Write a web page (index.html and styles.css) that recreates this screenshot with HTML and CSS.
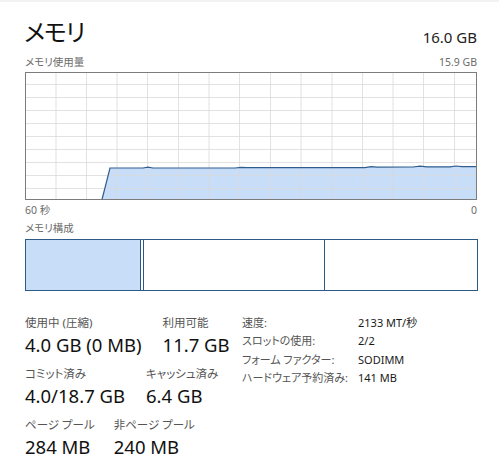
FILE: index.html
```html
<!DOCTYPE html>
<html lang="ja">
<head>
<meta charset="utf-8">
<link rel="stylesheet" href="styles.css">
</head>
<body>
<div class="topline"></div>
<main class="panel">
  <header class="head">
    <h1 class="title">メモリ</h1>
    <div class="total">16.0 GB</div>
  </header>
  <div class="caption-row usage">
    <span>メモリ使用量</span>
    <span>15.9 GB</span>
  </div>
  <svg class="chart" width="452" height="128" viewBox="0 0 452 128">
    <path class="area" d="M77 127.5 L85 96 L118 96 L123 95.2 L128 96 L210 96 L216 95.4 L222 95.6 L340 95.6 L346 94.6 L352 95.2 L388 95 L395 94.2 L402 94.8 L425 94.8 L431 94 L437 94.6 L451.5 94.6 L451.5 127.5 Z"/>
    <g class="grid">
      <line x1="31" y1="0" x2="31" y2="128"/>
      <line x1="61.5" y1="0" x2="61.5" y2="128"/>
      <line x1="92" y1="0" x2="92" y2="128"/>
      <line x1="122.5" y1="0" x2="122.5" y2="128"/>
      <line x1="153.5" y1="0" x2="153.5" y2="128"/>
      <line x1="184" y1="0" x2="184" y2="128"/>
      <line x1="214.5" y1="0" x2="214.5" y2="128"/>
      <line x1="245.5" y1="0" x2="245.5" y2="128"/>
      <line x1="276" y1="0" x2="276" y2="128"/>
      <line x1="307" y1="0" x2="307" y2="128"/>
      <line x1="337.5" y1="0" x2="337.5" y2="128"/>
      <line x1="368" y1="0" x2="368" y2="128"/>
      <line x1="398.5" y1="0" x2="398.5" y2="128"/>
      <line x1="429.5" y1="0" x2="429.5" y2="128"/>
      <line x1="0" y1="12.5" x2="452" y2="12.5"/>
      <line x1="0" y1="25.5" x2="452" y2="25.5"/>
      <line x1="0" y1="38.5" x2="452" y2="38.5"/>
      <line x1="0" y1="51.5" x2="452" y2="51.5"/>
      <line x1="0" y1="64.5" x2="452" y2="64.5"/>
      <line x1="0" y1="77.5" x2="452" y2="77.5"/>
      <line x1="0" y1="90.5" x2="452" y2="90.5"/>
      <line x1="0" y1="103.5" x2="452" y2="103.5"/>
      <line x1="0" y1="116.5" x2="452" y2="116.5"/>
    </g>
    <path class="line" d="M77 127.5 L85 96 L118 96 L123 95.2 L128 96 L210 96 L216 95.4 L222 95.6 L340 95.6 L346 94.6 L352 95.2 L388 95 L395 94.2 L402 94.8 L425 94.8 L431 94 L437 94.6 L451.5 94.6"/>
    <rect class="frame" x="0.5" y="0.5" width="451" height="127"/>
  </svg>
  <div class="caption-row axis">
    <span>60 秒</span>
    <span>0</span>
  </div>
  <div class="caption-row comp-label">
    <span>メモリ構成</span>
  </div>
  <div class="composition">
    <div class="seg inuse" style="width:115px"></div>
    <div class="seg modified" style="width:3px"></div>
    <div class="seg standby" style="width:181px"></div>
    <div class="seg free"></div>
  </div>

  <section class="stats">
    <div class="left">
      <div class="row">
        <div class="stat"><div class="label">使用中 (圧縮)</div><div class="value">4.0 GB (0 MB)</div></div>
        <div class="stat"><div class="label">利用可能</div><div class="value">11.7 GB</div></div>
      </div>
      <div class="row">
        <div class="stat"><div class="label">コミット済み</div><div class="value">4.0/18.7 GB</div></div>
        <div class="stat"><div class="label">キャッシュ済み</div><div class="value">6.4 GB</div></div>
      </div>
      <div class="row">
        <div class="stat"><div class="label">ページ プール</div><div class="value">284 MB</div></div>
        <div class="stat"><div class="label">非ページ プール</div><div class="value">240 MB</div></div>
      </div>
    </div>
    <dl class="props">
      <dt>速度:</dt><dd>2133 MT/秒</dd>
      <dt>スロットの使用:</dt><dd>2/2</dd>
      <dt>フォーム ファクター:</dt><dd>SODIMM</dd>
      <dt>ハードウェア予約済み:</dt><dd>141 MB</dd>
    </dl>
  </section>
</main>
</body>
</html>
```

FILE: styles.css
```css
* { box-sizing: border-box; }
html, body {
  margin: 0;
  padding: 0;
  background: #fff;
}
body {
  font-family: "Noto Sans", "Noto Sans CJK JP", sans-serif;
  font-feature-settings: "palt";
  color: #1a1a1a;
  width: 499px;
  height: 475px;
  overflow: hidden;
}
.topline {
  height: 2px;
  background: #f2f2f2;
}
.panel {
  padding: 0 22px 0 25px;
  width: 499px;
}
.head {
  display: flex;
  justify-content: space-between;
  align-items: flex-end;
  height: 46px;
}
.title {
  margin: 0;
  font-size: 24px;
  font-weight: 400;
  line-height: 30px;
  letter-spacing: -1px;
  color: #111;
  margin-left: -1px;
  padding-bottom: 1px;
}
.total {
  font-size: 15px;
  line-height: 18px;
  color: #222;
  padding-bottom: 2px;
}
.caption-row {
  display: flex;
  justify-content: space-between;
  font-size: 10.5px;
  line-height: 14px;
  color: #6b6b6b;
}
.caption-row.usage {
  height: 24px;
  padding-top: 7px;
}
.chart {
  display: block;
}
.area { fill: #c8ddf7; }
.grid line { stroke: #d9d9d9; stroke-width: 1; opacity: 0.75; }
.line { fill: none; stroke: #2f5e8e; stroke-width: 1.2; }
.frame { fill: none; stroke: #7c7c7c; stroke-width: 1; }
.axis {
  height: 18px;
  padding-top: 3px;
}
.comp-label {
  height: 21px;
  padding-top: 3px;
}
.composition {
  display: flex;
  height: 52px;
  border: 1.5px solid #2c5a88;
  width: 453px;
}
.seg {
  height: 100%;
  border-right: 1.5px solid #2c5a88;
}
.seg.inuse { background: #c8ddf7; }
.seg.free { flex: 1; border-right: none; }
.stats {
  display: flex;
  align-items: flex-start;
  margin-top: 24px;
}
.left {
  width: 217px;
  display: flex;
  flex-direction: column;
  gap: 7px;
}
.row {
  display: flex;
  gap: 21px;
}
.row:last-child {
  gap: 19px;
}
.label {
  font-size: 11.5px;
  line-height: 16px;
  color: #555;
  white-space: nowrap;
}
.value {
  font-size: 18.5px;
  line-height: 28px;
  color: #111;
  white-space: nowrap;
}
.props {
  margin: 0;
  display: grid;
  grid-template-columns: 116px auto;
  row-gap: 2px;
  font-size: 11px;
  line-height: 16.3px;
  padding-top: 0;
}
.props dt { color: #555; margin: 0; white-space: nowrap; }
.props dd { color: #1a1a1a; margin: 0; white-space: nowrap; }
```
